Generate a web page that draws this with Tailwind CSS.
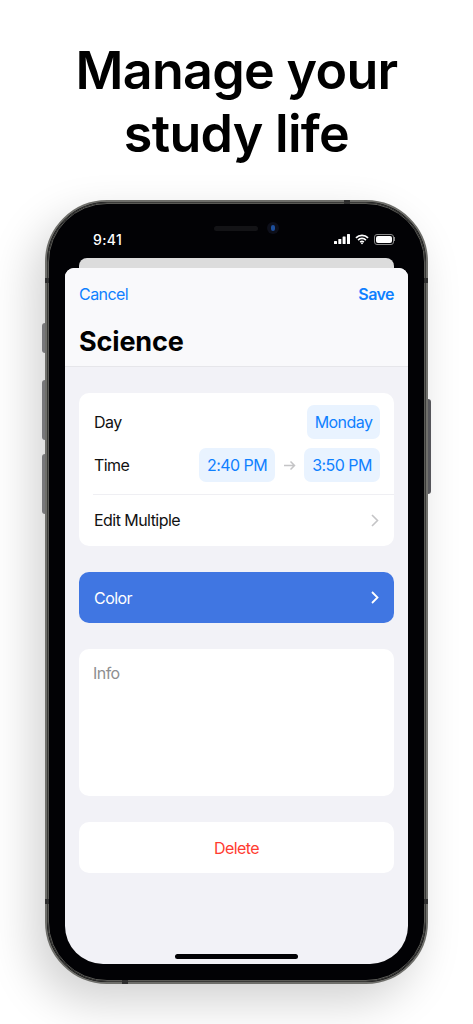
<!DOCTYPE html>
<html lang="en">
<head>
    <meta charset="UTF-8">
    <meta name="viewport" content="width=device-width, initial-scale=1.0">
    <title>Manage your study life</title>
    <script src="https://cdn.jsdelivr.net/npm/@tailwindcss/browser@4"></script>
</head>
<body class="bg-white h-[1024px] w-[473px] overflow-hidden font-['Inter',sans-serif] text-black">

    <!-- Heading -->
    <h1 class="h-[200px] pt-[39px] text-center text-[52px] leading-[63px] font-semibold tracking-[-0.7px] text-black">Manage your<br>study life</h1>

    <!-- Phone -->
    <div class="relative ml-[45px] w-[383px] h-[784px] rounded-[62px] bg-[#020205] border-[2px] border-[#6e6e6a] p-[18px] pt-0 shadow-[-12px_18px_45px_rgba(0,0,0,0.18)]">

        <!-- Side buttons -->
        <div class="absolute left-[-5px] top-[121px] w-[3px] h-[30px] rounded-l-sm bg-[#77777a]"></div>
        <div class="absolute left-[-5px] top-[178px] w-[3px] h-[60px] rounded-l-sm bg-[#77777a]"></div>
        <div class="absolute left-[-5px] top-[252px] w-[3px] h-[60px] rounded-l-sm bg-[#77777a]"></div>
        <div class="absolute right-[-5px] top-[197px] w-[3px] h-[95px] rounded-r-sm bg-[#55555a]"></div>

        <!-- Inner rim -->
        <div class="absolute inset-0 rounded-[60px] border border-[#3a3a38]"></div>
        <div class="absolute inset-[1px] rounded-[59px] border border-[#5a5a56]"></div>

        <!-- Antenna bands -->
        <div class="absolute left-[-2px] top-[76px] w-[4px] h-[5px] bg-[#2e2e2e]"></div>
        <div class="absolute right-[-2px] top-[76px] w-[4px] h-[5px] bg-[#2e2e2e]"></div>
        <div class="absolute left-[-2px] bottom-[78px] w-[4px] h-[5px] bg-[#2e2e2e]"></div>
        <div class="absolute right-[-2px] bottom-[78px] w-[4px] h-[5px] bg-[#2e2e2e]"></div>
        <div class="absolute left-[297px] top-[-2px] w-[6px] h-[4px] bg-[#2e2e2e]"></div>
        <div class="absolute left-[75px] bottom-[-2px] w-[6px] h-[4px] bg-[#2e2e2e]"></div>

        <!-- Speaker and camera -->
        <div class="absolute left-[167px] top-[24px] w-[44px] h-[5px] rounded-full bg-[#131316]"></div>
        <div class="absolute left-[220px] top-[20px] w-[12px] h-[12px] rounded-full bg-[#0d0f1a] flex items-center justify-center">
            <div class="w-[4px] h-[6px] rounded-full bg-[#1d4f9c]"></div>
        </div>

        <!-- Status bar -->
        <div class="flex items-center justify-between h-[56px] pt-[18px] pl-[28px] pr-[13px] text-white">
            <span class="text-[14px] font-medium tracking-[0.4px]">9:41</span>
            <div class="flex items-center gap-[5px]">
                <svg width="16" height="10" viewBox="0 0 16 10" fill="#fff">
                    <rect x="0" y="7" width="3" height="3" rx="0.5"/>
                    <rect x="4.3" y="5" width="3" height="5" rx="0.5"/>
                    <rect x="8.6" y="2.5" width="3" height="7.5" rx="0.5"/>
                    <rect x="13" y="0" width="3" height="10" rx="0.5"/>
                </svg>
                <svg width="14" height="11" viewBox="0 0 15 11" fill="none" stroke="#fff" stroke-width="1.8">
                    <path d="M1 3.8a9.2 9.2 0 0 1 13 0"/>
                    <path d="M3.3 6.1a6 6 0 0 1 8.4 0"/>
                    <path d="M5.5 8.3a3 3 0 0 1 4 0"/>
                    <circle cx="7.5" cy="9.7" r="0.6" fill="#fff" stroke-width="0.8"/>
                </svg>
                <div class="flex items-center">
                    <div class="w-[20px] h-[11px] rounded-[3px] border border-[#8a8a8a] p-[1px]">
                        <div class="w-full h-full rounded-[2px] bg-white"></div>
                    </div>
                    <div class="w-[1px] h-[4px] bg-[#8a8a8a]"></div>
                </div>
            </div>
        </div>

        <!-- Sheet behind -->
        <div class="mx-[14px] h-[10px] rounded-t-[8px] bg-[#dcdcdc]"></div>

        <!-- Sheet -->
        <div class="relative h-[696px] rounded-t-[9px] rounded-b-[38px] bg-[#f2f2f7] overflow-hidden text-[16px] tracking-[-0.55px]">
            <div class="h-[99px] bg-[#f9f9fb] border-b border-[#e6e6ea] px-[14px]">
                <div class="flex items-center justify-between h-[51px]">
                    <span class="text-[#0f80ff]">Cancel</span>
                    <span class="font-semibold text-[#0f80ff]">Save</span>
                </div>
                <h2 class="text-[27px] leading-[34px] font-bold tracking-[-0.15px] mt-[6px]">Science</h2>
            </div>

            <div class="flex flex-col gap-[26px] px-[14px] pt-[26px]">
                <!-- Schedule card -->
                <div class="h-[153px] rounded-[10px] bg-white pl-[15px] pt-[12px]">
                    <div class="flex items-center justify-between h-[34px] pr-[14px]">
                        <span class="text-[#111]">Day</span>
                        <span class="flex items-center justify-center w-[73px] h-[34px] rounded-[7px] bg-[#e9f3ff] text-[#0f80ff]">Monday</span>
                    </div>
                    <div class="flex items-center justify-between h-[34px] mt-[9px] pr-[14px]">
                        <span class="text-[#111]">Time</span>
                        <div class="flex items-center">
                            <span class="flex items-center justify-center w-[76px] h-[34px] rounded-[7px] bg-[#e9f3ff] text-[#0f80ff]">2:40 PM</span>
                            <svg class="mx-[8px]" width="13" height="11" viewBox="0 0 13 11" fill="none" stroke="#c4c4c6" stroke-width="1.5">
                                <path d="M1 5.5h10.5M7.5 1.5l4 4-4 4"/>
                            </svg>
                            <span class="flex items-center justify-center w-[76px] h-[34px] rounded-[7px] bg-[#e9f3ff] text-[#0f80ff]">3:50 PM</span>
                        </div>
                    </div>
                    <div class="h-[1px] bg-[#efeff3] ml-[-1px] mt-[12px]"></div>
                    <div class="flex items-center justify-between h-[50px] pr-[15px]">
                        <span class="text-[#111]">Edit Multiple</span>
                        <svg width="8" height="13" viewBox="0 0 8 13" fill="none" stroke="#c4c4c6" stroke-width="1.6">
                            <path d="M1 1l5.5 5.5L1 12"/>
                        </svg>
                    </div>
                </div>

                <!-- Color row -->
                <div class="flex items-center justify-between h-[51px] rounded-[10px] bg-[#4076e2] pl-[15px] pr-[15px] text-white">
                    <span>Color</span>
                    <svg width="8" height="13" viewBox="0 0 8 13" fill="none" stroke="#fff" stroke-width="1.8">
                        <path d="M1 1l5.5 5.5L1 12"/>
                    </svg>
                </div>

                <!-- Info -->
                <div class="h-[147px] rounded-[10px] bg-white pl-[14px] pt-[12px] text-[#8e8e90]">Info</div>

                <!-- Delete -->
                <div class="flex items-center justify-center h-[51px] rounded-[10px] bg-white text-[#ff3b30]">Delete</div>
            </div>

            <!-- Home indicator -->
            <div class="absolute left-[110px] bottom-[5px] w-[123px] h-[5px] rounded-full bg-[#020205]"></div>
        </div>
    </div>
</body>
</html>
